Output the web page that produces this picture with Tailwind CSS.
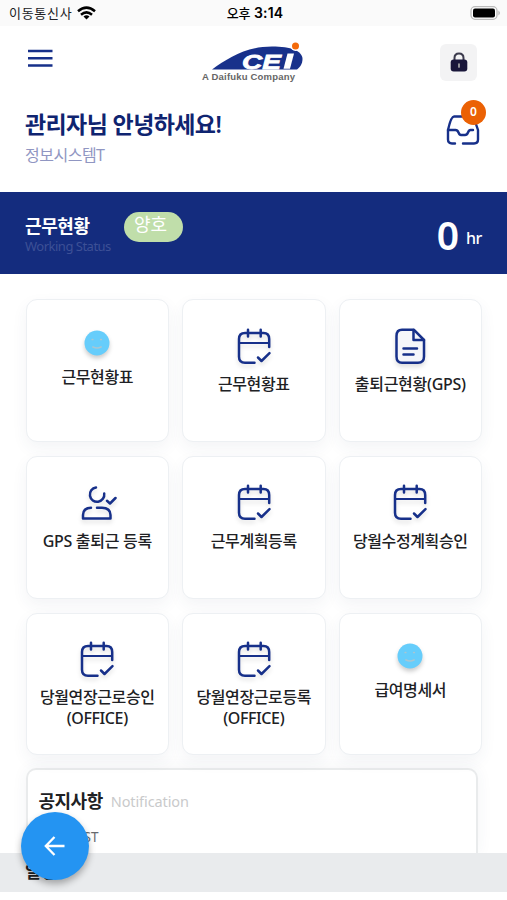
<!DOCTYPE html>
<html lang="ko">
<head>
<meta charset="utf-8">
<title>근무현황</title>
<script src="https://cdn.jsdelivr.net/npm/@tailwindcss/browser@4"></script>
</head>
<body class="relative w-[507px] h-[900px] overflow-hidden bg-white font-['Noto_Sans','Noto_Sans_CJK_KR',sans-serif] text-[#202124]">
<svg class="hidden">
  <defs>
    <symbol id="cal" viewBox="0 0 36 36">
      <g fill="none" stroke="#17308a" stroke-width="2.500" stroke-linecap="round">
        <path d="M18.500 34.700H9Q3 34.700 3 28.700V11Q3 5 9 5H27.500Q33.200 5 33.200 11V19"/>
        <path d="M3 15H33" stroke-width="2.200"/>
        <path d="M12 1.800V8.500M24.700 1.800V8.500"/>
        <path d="M22 29.500L25.500 33L33.500 25.200" stroke-linejoin="round"/>
      </g>
    </symbol>
    <symbol id="smile" viewBox="0 0 26 26">
      <circle cx="13" cy="13" r="12.500" fill="#66cdfb"/>
      <g fill="none" stroke="#a9c6d2" stroke-width="1.700" stroke-linecap="round">
        <path d="M8.200 9.500H8.800M16.700 9.500H17.300"/>
        <path d="M9 17Q13 19 17 17"/>
      </g>
    </symbol>
  </defs>
</svg>

<div class="h-[26px] bg-[#fafafa] grid grid-cols-3 items-center pl-[9px] pr-[6px] text-[13px] leading-none">
  <div class="flex items-center gap-[5px]">
    <span class="tracking-[0.7px] whitespace-nowrap">이동통신사</span>
    <svg class="w-[19px] h-[14px]" viewBox="0 0 19 14"><g fill="none" stroke="#000" stroke-width="2.500"><path d="M1 5.300Q9.500 -2 18 5.300"/><path d="M4 8.700Q9.500 4 15 8.700"/></g><path d="M6.500 10.500Q9.500 8 12.500 10.500L9.500 13.500Z"/></svg>
  </div>
  <div class="text-center font-medium whitespace-nowrap text-black"><span>오후</span> <span class="font-['Inter'] text-[14px] font-semibold tracking-[0.2px]">3:14</span></div>
  <svg class="justify-self-end w-[31px] h-[14px]" viewBox="0 0 31 14"><rect x="1" y=".7" width="26" height="12.600" rx="4" fill="#fff" stroke="#bbb" stroke-width="1.300"/><rect x="3" y="2.500" width="22" height="9" rx="2"/><path d="M28.500 4.500Q31 7 28.500 9.500Z" fill="#aaa"/></svg>
</div>

<header class="h-[166px] px-[26px] pt-[13px]">
  <div class="h-[48px] flex items-center justify-between">
    <svg class="w-[28px] h-[20px] mt-[-10px] ml-[1px]" viewBox="0 0 28 20"><path d="M1 3H25.500M1 10.300H25.500M1 17.600H25.500" stroke="#17308a" stroke-width="2.500"/></svg>
    <svg class="w-[106px] h-[42px] ml-[10px] mt-[-3px]" viewBox="0 0 106 42">
      <path d="M12 28.500C28 17 46 5.500 72 5.500C91 5.500 102.500 10 102.500 18C102.500 23 100 26 97 28.500Z" fill="#18318b"/>
      <text x="42" y="27.500" textLength="39" lengthAdjust="spacingAndGlyphs" font-family="Liberation Sans" font-weight="700" font-style="italic" font-size="21" fill="#fff" stroke="#fff" stroke-width=".8">CE</text>
      <path d="M87.500 12.500H94L90 27.800H83.500Z" fill="#fff"/>
      <circle cx="95.500" cy="5" r="5" fill="#fff"/>
      <circle cx="95.500" cy="5" r="3.500" fill="#f46a0a"/>
      <text x="2" y="38.500" textLength="93" font-family="Liberation Sans" font-weight="700" font-size="9.500" fill="#666">A Daifuku Company</text>
    </svg>
    <div class="size-[37px] rounded-[6px] bg-[#f3f3f4] flex items-center justify-center mr-[4px] mt-[-2px]">
      <svg class="w-[18px] h-[20px]" viewBox="0 0 18 20"><path d="M4.500 9V6Q4.500 1.500 9 1.500T13.500 6V9" fill="none" stroke="#3c3b4d" stroke-width="2"/><rect x=".7" y="7.500" width="16.600" height="12" rx="3" fill="#19163a"/><path d="M9 12V15" stroke="#aaa" stroke-width="1.700" stroke-linecap="round"/></svg>
    </div>
  </div>
  <div class="flex justify-between mt-[12px]">
    <div>
      <h1 class="text-[23px] leading-[50px] font-semibold tracking-[-0.6px] ml-[-1px] text-[#0f2470] whitespace-nowrap">관리자님 안녕하세요!</h1>
      <p class="text-[16px] leading-[20px] mt-[-4px] ml-[-1px] text-[#9096c2] tracking-[-0.5px]">정보시스템T</p>
    </div>
    <div class="relative w-[34px] h-[32px] mt-[15px] mr-[1px]">
      <svg class="w-[34px] h-[32px]" viewBox="0 0 34 32"><g fill="none" stroke="#17308a" stroke-width="2.400" stroke-linecap="round" stroke-linejoin="round"><path d="M9 29.500H6Q2 29.500 2 25.500V16Q5 2.500 8 2.500H24Q28 2.500 32 16V25.500Q32 29.500 28 29.500H17"/><path d="M2 16H9.500Q11.500 16 12.500 18.500T15 21H19Q21 21 22 18.500T24.500 16H27"/></g></svg>
      <span class="absolute left-[15px] top-[-14px] size-[25px] rounded-full bg-[#eb6104] text-white text-[12px] leading-[24px] text-center font-semibold">0</span>
    </div>
  </div>
</header>

<section class="h-[82px] bg-[#142c7e] px-[25px] flex justify-between items-start text-white">
  <div class="flex gap-[13px]">
    <div class="w-[86px] pt-[21px]">
      <div class="text-[18px] leading-[27px] font-semibold tracking-[-0.4px] whitespace-nowrap">근무현황</div>
      <div class="text-[13px] leading-[13px] tracking-[-0.5px] text-[#3d5096] whitespace-nowrap">Working Status</div>
    </div>
    <div class="mt-[20px] w-[59px] h-[30px] rounded-full bg-[#c0deaa] text-[18px] leading-[25px] pl-[10px]">양호</div>
  </div>
  <div class="flex gap-[7px] leading-[86px]"><span class="text-[39px] font-semibold">0</span><span class="text-[16px] font-medium mt-[3px] tracking-[-0.4px]">hr</span></div>
</section>

<main class="px-[25.500px] pt-[25px]">
  <div class="grid grid-cols-[143.500px_143.500px_143.500px] gap-x-[13px] gap-y-[14px] text-[16px] leading-[21px] font-medium tracking-[-0.4px] text-center">
    <div class="h-[143px] rounded-[11px] border border-[#edf0f3] bg-white shadow-[0_6px_16px_rgba(50,70,100,0.06)] pt-[30px] flex flex-col items-center"><svg class="size-[26px] drop-shadow-[0_3px_2px_rgba(0,0,0,0.2)]"><use href="#smile"/></svg><div class="mt-[11px]">근무현황표</div></div>
    <div class="h-[143px] rounded-[11px] border border-[#edf0f3] bg-white shadow-[0_6px_16px_rgba(50,70,100,0.06)] pt-[28px] flex flex-col items-center"><svg class="size-[36px] drop-shadow-[0_3px_2px_rgba(0,0,0,0.12)]"><use href="#cal"/></svg><div class="mt-[10px]">근무현황표</div></div>
    <div class="h-[143px] rounded-[11px] border border-[#edf0f3] bg-white shadow-[0_6px_16px_rgba(50,70,100,0.06)] pt-[28px] flex flex-col items-center">
      <svg class="size-[36px] drop-shadow-[0_3px_2px_rgba(0,0,0,0.12)]" viewBox="0 0 36 36"><g fill="none" stroke="#17308a" stroke-width="2.500" stroke-linecap="round" stroke-linejoin="round"><path d="M10 1.800H22L32 12V28.500Q32 34.700 26 34.700H10Q4.500 34.700 4.500 28.500V8Q4.500 1.800 10 1.800Z" fill="#f5f6fa"/><path d="M21.500 2V12H32M11.500 20.500H25M11.500 26.500H21.500"/></g></svg>
      <div class="mt-[10px] tracking-[-0.3px] whitespace-nowrap">출퇴근현황(GPS)</div></div>
    <div class="h-[143px] rounded-[11px] border border-[#edf0f3] bg-white shadow-[0_6px_16px_rgba(50,70,100,0.06)] pt-[28px] flex flex-col items-center">
      <svg class="size-[36px] overflow-visible drop-shadow-[0_3px_2px_rgba(0,0,0,0.12)]" viewBox="0 0 36 36"><g fill="none" stroke="#17308a" stroke-width="2.500" stroke-linecap="round" stroke-linejoin="round"><path d="M17 2.500A7.200 7.200 0 1 0 25.200 8.500"/><path d="M28 15.800L31 18.500L36.500 13" /><path d="M12 22.700Q4 23 4 30V33.500H31.500V30Q31.500 23 23 22.700H18"/></g></svg>
      <div class="mt-[10px] tracking-[-0.3px] whitespace-nowrap">GPS 출퇴근 등록</div></div>
    <div class="h-[143px] rounded-[11px] border border-[#edf0f3] bg-white shadow-[0_6px_16px_rgba(50,70,100,0.06)] pt-[27px] flex flex-col items-center"><svg class="size-[36px] drop-shadow-[0_3px_2px_rgba(0,0,0,0.12)]"><use href="#cal"/></svg><div class="mt-[11px]">근무계획등록</div></div>
    <div class="h-[143px] rounded-[11px] border border-[#edf0f3] bg-white shadow-[0_6px_16px_rgba(50,70,100,0.06)] pt-[27px] flex flex-col items-center"><svg class="size-[36px] drop-shadow-[0_3px_2px_rgba(0,0,0,0.12)]"><use href="#cal"/></svg><div class="mt-[11px] whitespace-nowrap">당월수정계획승인</div></div>
    <div class="h-[142px] rounded-[11px] border border-[#edf0f3] bg-white shadow-[0_6px_16px_rgba(50,70,100,0.06)] pt-[27px] flex flex-col items-center"><svg class="size-[36px] drop-shadow-[0_3px_2px_rgba(0,0,0,0.12)]"><use href="#cal"/></svg><div class="mt-[10px] whitespace-nowrap">당월연장근로승인<br>(OFFICE)</div></div>
    <div class="h-[142px] rounded-[11px] border border-[#edf0f3] bg-white shadow-[0_6px_16px_rgba(50,70,100,0.06)] pt-[27px] flex flex-col items-center"><svg class="size-[36px] drop-shadow-[0_3px_2px_rgba(0,0,0,0.12)]"><use href="#cal"/></svg><div class="mt-[10px] whitespace-nowrap">당월연장근로등록<br>(OFFICE)</div></div>
    <div class="h-[142px] rounded-[11px] border border-[#edf0f3] bg-white shadow-[0_6px_16px_rgba(50,70,100,0.06)] pt-[29px] flex flex-col items-center"><svg class="size-[26px] drop-shadow-[0_3px_2px_rgba(0,0,0,0.2)]"><use href="#smile"/></svg><div class="mt-[11px]">급여명세서</div></div>
  </div>
  <section class="mt-[13px] w-[452px] h-[85px] rounded-t-[10px] border-2 border-b-0 border-[#e9ebec] bg-white pl-[11px] pt-[18px] shadow-[0_0_16px_rgba(50,70,100,0.06)]">
    <div class="flex items-center gap-[8px] leading-[26px]"><h2 class="text-[18px] font-semibold tracking-[-0.5px]">공지사항</h2><span class="text-[14.500px] tracking-[-0.1px] text-[#c9cacb]">Notification</span></div>
    <div class="mt-[13px] pl-[30px] text-[13.500px] leading-[20px] text-[#666a6e]">TEST</div>
  </section>
</main>
<section class="relative h-[39px] bg-[#e9ebed] pl-[25px] text-[17px] leading-[38px] font-semibold">일정</section>

<button class="absolute left-[21px] top-[812px] size-[68px] rounded-full bg-[#2494f2] shadow-[0_4px_7px_rgba(0,0,0,0.3)] flex items-center justify-center" aria-label="뒤로">
  <svg class="w-[22px] h-[22px]" viewBox="0 0 22 22"><path d="M20.500 11H2M10.500 2L1.800 11L10.500 20" fill="none" stroke="#fff" stroke-width="2.300"/></svg>
</button>
</body>
</html>
